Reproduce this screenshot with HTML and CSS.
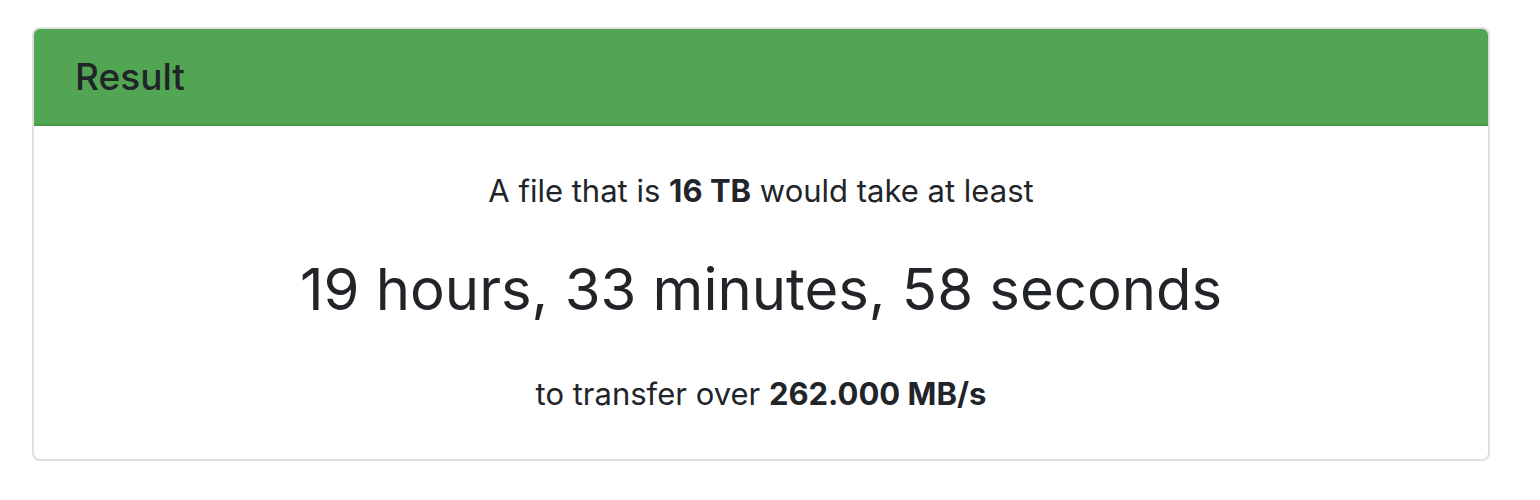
FILE: index.html
```html
<!DOCTYPE html>
<html>
<head>
<meta charset="utf-8">
<link rel="stylesheet" href="styles.css">
</head>
<body>
<div class="page">
  <div class="card">
    <div class="card-header">Result</div>
    <div class="card-body">
      <p class="line">A file that is <strong>16 TB</strong> would take at least</p>
      <p class="big">19 hours, 33 minutes, 58 seconds</p>
      <p class="line">to transfer over <strong>262.000 MB/s</strong></p>
    </div>
  </div>
</div>
</body>
</html>
```
FILE: styles.css
```css
html, body {
  margin: 0;
  padding: 0;
  background: #ffffff;
}
body {
  font-family: Inter, "Noto Sans", sans-serif;
  color: #212529;
}
.page {
  padding: 27px 50px 0 32px;
}
.card {
  border: 2px solid #dfdfdf;
  border-radius: 8px;
  overflow: hidden;
  background: #fff;
}
.card-header {
  background: #52a552;
  border-bottom: 2px solid #479a47;
  height: 95px;
  display: flex;
  align-items: center;
  padding: 0 41px;
  font-size: 37px;
  font-weight: 500;
}
.card-body {
  display: flex;
  flex-direction: column;
  align-items: center;
  padding: 43px 40px 43px;
}
.card-body p {
  margin: 0;
}
.line {
  font-size: 31px;
  line-height: 44px;
}
.line strong {
  font-weight: 700;
}
.big {
  font-size: 58px;
  line-height: 80px;
  margin: 36px 0 43px !important;
}
```
